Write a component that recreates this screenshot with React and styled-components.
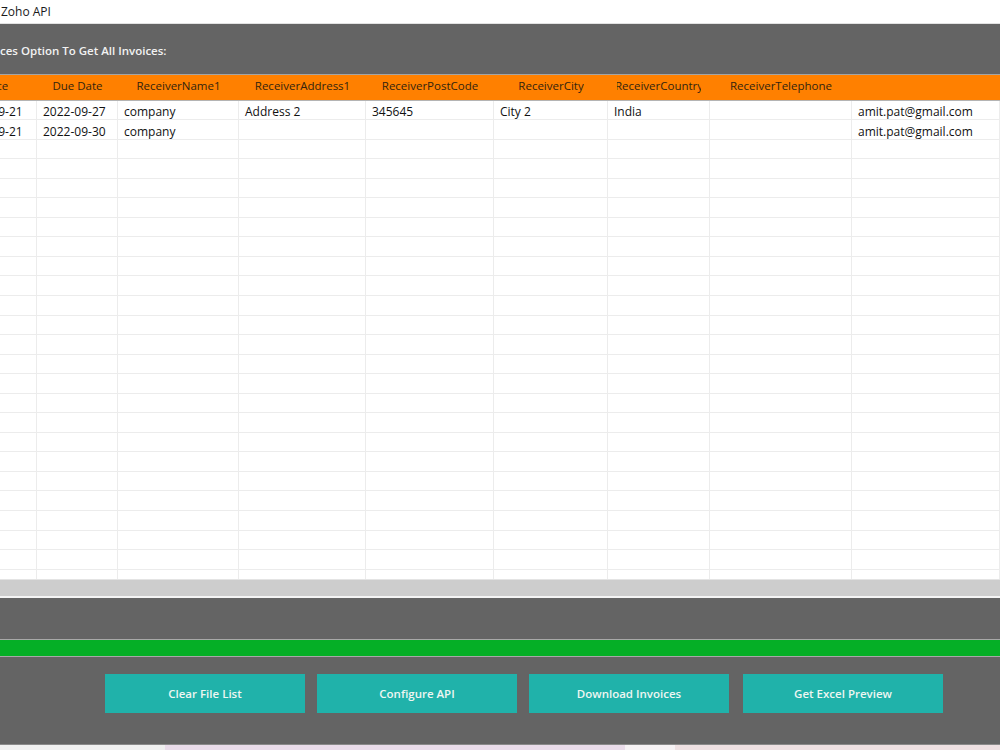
import React from 'react';
import styled, { createGlobalStyle } from 'styled-components';

//* ======================
//*     STYLED_COMPONENT
//* ======================
const GlobalStyle = createGlobalStyle`
  html, body {
    margin: 0;
    padding: 0;
    background: #646464;
  }
  body {
    font-family: 'Open Sans', 'Noto Sans', sans-serif;
    overflow: hidden;
  }
`;
const Window = styled.div`
  width: 1000px;
  height: 750px;
  display: flex;
  flex-direction: column;
  overflow: hidden;
`;
const TitleBar = styled.div`
  height: 23px;
  background: #ffffff;
  border-bottom: 1px solid #e2e2e2;
  display: flex;
  align-items: center;
  padding-left: 1px;
  font-size: 12px;
  color: #1a1a1a;
  flex-shrink: 0;
`;
const TopPanel = styled.div`
  height: 51px;
  background: #646464;
  border-bottom: 1px solid #a4a4a4;
  display: flex;
  align-items: center;
  padding-top: 2px;
  box-sizing: border-box;
  flex-shrink: 0;
`;
const PanelLabel = styled.span`
  font-size: 11.5px;
  font-weight: 600;
  color: #f2f2f2;
  white-space: nowrap;
`;
const GridViewport = styled.div`
  height: 504px;
  background: #ffffff;
  overflow: hidden;
  flex-shrink: 0;
`;
const GridTable = styled.div`
  width: 1046px;
  margin-left: -46px;
`;
const Row = styled.div`
  display: grid;
  grid-template-columns: 83px 81px 121px 127px 128px 114px 102px 142px 1fr;
  height: ${(p) => (p.$head ? '25.5px' : '19.55px')};
  background: ${(p) => (p.$head ? '#ff8000' : '#ffffff')};
  border-bottom: 1px solid ${(p) => (p.$head ? '#b4b4b4' : '#ececec')};
  box-sizing: border-box;
`;
const HeadCell = styled.div`
  display: flex;
  align-items: center;
  justify-content: center;
  overflow: hidden;
  padding-bottom: 4px;
`;
const HeadLabel = styled.div`
  display: flex;
  justify-content: center;
  width: ${(p) => p.$clip || 'auto'};
  overflow: hidden;
  white-space: nowrap;
  font-size: 11.5px;
  color: #33240f;
`;
const Cell = styled.div`
  display: flex;
  align-items: center;
  overflow: hidden;
  white-space: nowrap;
  padding: 4px 0 0 6px;
  border-right: 1px solid #ececec;
  font-size: 12px;
  color: #111111;
`;
const ScrollBar = styled.div`
  height: 16px;
  background: #cdcdcd;
  border-top: 1px solid #e4e4e4;
  border-bottom: 2px solid #f4f4f4;
  flex-shrink: 0;
`;
const MidPanel = styled.div`
  height: 41px;
  background: #646464;
  border-bottom: 1px solid #a8a8a8;
  flex-shrink: 0;
`;
const Progress = styled.div`
  height: 16px;
  background: #05af26;
  border-bottom: 1px solid #a8a8a8;
  flex-shrink: 0;
`;
const ButtonPanel = styled.div`
  height: 87px;
  background: #646464;
  display: flex;
  align-items: flex-start;
  padding: 17px 0 0 105px;
  box-sizing: border-box;
  gap: 12px;
  flex-shrink: 0;
`;
const ActionBtn = styled.button`
  width: 200px;
  height: 39px;
  margin-right: ${(p) => p.$extra || 0}px;
  border: none;
  background: #20b2aa;
  color: #eef6f2;
  font-family: 'Open Sans', 'Noto Sans', sans-serif;
  font-size: 11.5px;
  font-weight: 600;
  cursor: pointer;
`;
const BottomStrip = styled.div`
  flex: 1;
  display: grid;
  grid-template-columns: 165px 460px 50px 1fr;
  border-top: 1px solid #8a8a8a;
`;
const StripPart = styled.div`
  background: ${(p) => p.$bg};
`;

//* ======================
//*    DATA
//* ======================
const headers = [
  { label: 'Date' },
  { label: 'Due Date' },
  { label: 'ReceiverName1' },
  { label: 'ReceiverAddress1' },
  { label: 'ReceiverPostCode' },
  { label: 'ReceiverCity' },
  { label: 'ReceiverCountry', clip: '84px' },
  { label: 'ReceiverTelephone' },
  { label: '' },
];
const rows = [
  ['2022-09-21', '2022-09-27', 'company', 'Address 2', '345645', 'City 2', 'India', '', 'amit.pat@gmail.com'],
  ['2022-09-21', '2022-09-30', 'company', '', '', '', '', '', 'amit.pat@gmail.com'],
];
const emptyRows = Array.from({ length: 23 }, () => Array(9).fill(''));

const App = () => {
  //* ======================
  //*    RENDER
  //* ======================
  return (
    <Window>
      <GlobalStyle />
      <TitleBar>Zoho API</TitleBar>
      <TopPanel>
        <PanelLabel>ces Option To Get All Invoices:</PanelLabel>
      </TopPanel>
      <GridViewport>
        <GridTable>
          <Row $head>
            {headers.map((h, i) => (
              <HeadCell key={i}>
                <HeadLabel $clip={h.clip}>{h.label}</HeadLabel>
              </HeadCell>
            ))}
          </Row>
          {[...rows, ...emptyRows].map((r, i) => (
            <Row key={i}>
              {r.map((c, j) => (
                <Cell key={j}>{c}</Cell>
              ))}
            </Row>
          ))}
        </GridTable>
      </GridViewport>
      <ScrollBar />
      <MidPanel />
      <Progress />
      <ButtonPanel>
        <ActionBtn>Clear File List</ActionBtn>
        <ActionBtn>Configure API</ActionBtn>
        <ActionBtn $extra={2}>Download Invoices</ActionBtn>
        <ActionBtn>Get Excel Preview</ActionBtn>
      </ButtonPanel>
      <BottomStrip>
        <StripPart $bg="#f0f0f0" />
        <StripPart $bg="#eadcea" />
        <StripPart $bg="#f6f2f4" />
        <StripPart $bg="#eee0e2" />
      </BottomStrip>
    </Window>
  );
};
export default App;
